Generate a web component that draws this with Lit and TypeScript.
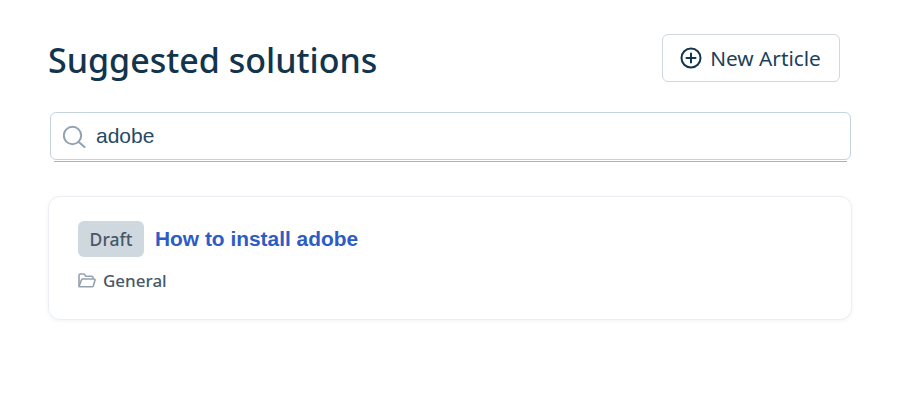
import { LitElement, html, css } from "lit";
import { customElement } from "lit/decorators.js";

@customElement("app-root")
export class AppRoot extends LitElement {
  static styles = css`
    :host {
      display: block;
      min-height: 414px;
      background: #fff;
      font-family: "Noto Sans", sans-serif;
      color: #12344d;
    }
    .page {
      padding: 34px 48px 0 48px;
      width: 804px;
    }
    .header {
      display: flex;
      justify-content: space-between;
      align-items: flex-start;
      padding-right: 12px;
      height: 48px;
    }
    h1 {
      margin: 0;
      font-size: 34px;
      font-weight: 500;
      line-height: 52px;
    }
    .new-btn {
      display: flex;
      align-items: center;
      justify-content: center;
      gap: 8px;
      box-sizing: border-box;
      width: 178px;
      height: 48px;
      background: #fff;
      border: 1px solid #cfd7df;
      border-radius: 6px;
      font-family: inherit;
      font-size: 20.8px;
      color: #1d3f5a;
      padding: 0 1px 0 0;
    }
    .search-wrap {
      margin: 30px 1px 0 2px;
      position: relative;
    }
    .search {
      display: flex;
      align-items: center;
      gap: 9px;
      box-sizing: border-box;
      height: 48px;
      padding: 0 12px;
      border: 1px solid #c5d2e0;
      border-radius: 6px;
      background: #fff;
    }
    .search input {
      flex: 1;
      border: 0;
      outline: 0;
      padding: 0;
      background: transparent;
      font-family: "Liberation Sans", Arial, sans-serif;
      font-size: 21px;
      color: #264966;
    }
    .search-line {
      position: absolute;
      left: 4px;
      right: 4px;
      bottom: -2px;
      height: 1px;
      background: #a3b0d4;
    }
    .card {
      box-sizing: border-box;
      margin-top: 36px;
      height: 124px;
      padding: 24px 29px;
      border: 1px solid #ebeff3;
      border-radius: 12px;
      box-shadow: 0 1px 4px rgba(18, 52, 77, 0.06);
      background: #fff;
    }
    .title-row {
      display: flex;
      align-items: center;
      gap: 11px;
    }
    .badge {
      display: flex;
      align-items: center;
      justify-content: center;
      width: 66px;
      height: 36px;
      border-radius: 6px;
      background: #cfd7df;
      color: #475867;
      font-size: 17.5px;
      font-weight: 500;
    }
    .title {
      font-family: "Liberation Sans", Arial, sans-serif;
      font-size: 20.9px;
      font-weight: 700;
      color: #2c5cc5;
    }
    .meta {
      display: flex;
      align-items: center;
      gap: 7px;
      margin-top: 13px;
      font-size: 17px;
      font-weight: 500;
      color: #475867;
      line-height: 22px;
    }
  `;

  render() {
    return html`
      <div class="page">
        <div class="header">
          <h1>Suggested solutions</h1>
          <button class="new-btn">
            <svg width="22" height="22" viewBox="0 0 22 22" fill="none" stroke="#12344d" stroke-width="2" stroke-linecap="round">
              <circle cx="11" cy="11" r="9.5" />
              <path d="M11 6.5v9M6.5 11h9" />
            </svg>
            New Article
          </button>
        </div>
        <div class="search-wrap">
          <div class="search">
            <svg width="24" height="24" viewBox="0 0 24 24" fill="none" stroke="#92a2b1" stroke-width="2" stroke-linecap="round">
              <circle cx="9.5" cy="11.5" r="8.7" />
              <path d="M15.8 18l5.7 5" />
            </svg>
            <input type="text" .value=${"adobe"} />
          </div>
          <div class="search-line"></div>
        </div>
        <div class="card">
          <div class="title-row">
            <span class="badge">Draft</span>
            <span class="title">How to install adobe</span>
          </div>
          <div class="meta">
            <svg width="18" height="18" viewBox="0 0 18 16" fill="none" stroke="#92a2b1" stroke-width="1.6" stroke-linejoin="round">
              <path d="M1 13.5V2.5C1 1.7 1.6 1 2.4 1H6l2 2.2h5.6c.8 0 1.4.6 1.4 1.4V6" />
              <path d="M1 13.5 3.4 6.9C3.6 6.3 4.1 6 4.7 6H16c.7 0 1.2.7 1 1.3l-1.7 5.6c-.2.6-.7.9-1.3.9H2.2C1.6 13.8 1 13.5 1 13.5Z" />
            </svg>
            General
          </div>
        </div>
      </div>
    `;
  }
}
